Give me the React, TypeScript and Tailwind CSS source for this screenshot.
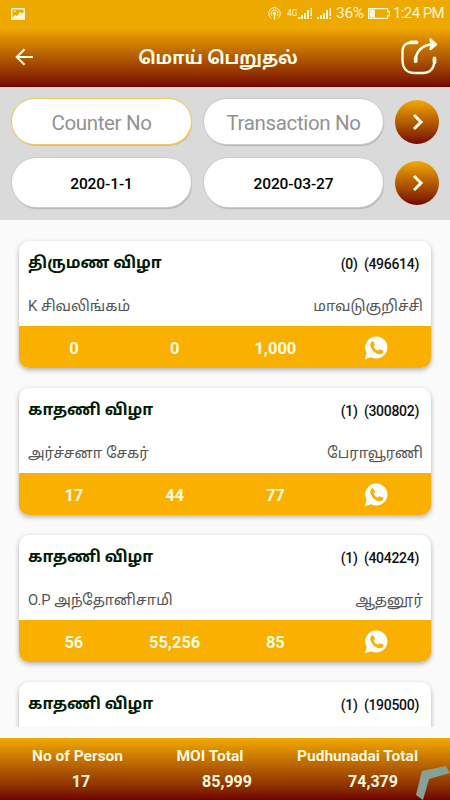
import { ReactNode } from 'react'

type Entry = {
	title: string
	count: number
	code: string
	name: string
	place: string
	values: string[]
}

const ENTRIES: Entry[] = [
	{ title: 'திருமண விழா', count: 0, code: '496614', name: 'K சிவலிங்கம்', place: 'மாவடுகுறிச்சி', values: ['0', '0', '1,000'] },
	{ title: 'காதணி விழா', count: 1, code: '300802', name: 'அர்ச்சனா சேகர்', place: 'பேராவூரணி', values: ['17', '44', '77'] },
	{ title: 'காதணி விழா', count: 1, code: '404224', name: 'O.P அந்தோனிசாமி', place: 'ஆதனூர்', values: ['56', '55,256', '85'] },
	{ title: 'காதணி விழா', count: 1, code: '190500', name: '', place: '', values: ['', '', ''] },
]

const TOTALS = [
	{ label: 'No of Person', value: '17' },
	{ label: 'MOI Total', value: '85,999' },
	{ label: 'Pudhunadai Total', value: '74,379' },
]

const Signal = () => (
	<svg width="15" height="12" viewBox="0 0 15 12" fill="currentColor">
		<path d="M0 9h2v2H0zM3 7h2v4H3zM6 5h2v6H6zM9 2h2v9H9zM12.500 0h1.500v8h-1.500zM12.500 9.500h1.500V11h-1.500z" />
	</svg>
)

const StatusBar = () => (
	<div className="flex h-[27px] shrink-0 items-center bg-[#eda900] pl-[11px] pr-[7px] text-[#fff6d8]">
		<svg width="14" height="12" viewBox="0 0 14 12">
			<path fill="currentColor" fillRule="evenodd" d="M1 0h12a1 1 0 0 1 1 1v10a1 1 0 0 1-1 1H1a1 1 0 0 1-1-1V1a1 1 0 0 1 1-1zm.5 1.500v8L4 7l2 1 3-4 1.500 1.500 2-1v-3zM3 2.500h1.500V4H3z" />
		</svg>
		<svg className="ml-auto" width="13" height="13" viewBox="0 0 13 13" fill="none" stroke="currentColor" strokeWidth="1">
			<path d="M3.200 11.300a5.800 5.800 0 1 1 6.600 0M4 8.900a3.500 3.500 0 1 1 5 0" />
			<circle cx="6.500" cy="6.300" r="1.200" fill="currentColor" />
			<path d="M6.500 7v5.500" strokeWidth="1.500" />
		</svg>
		<span className="ml-[6px] w-[11px] text-[8.500px] leading-none tracking-tight">4G</span>
		<Signal />
		<span className="ml-[4px] flex"><Signal /></span>
		<span className="ml-[4px] w-[30px] whitespace-nowrap text-[15.500px] leading-none tracking-[-0.300px]">36%</span>
		<svg className="ml-[2px]" width="22" height="11" viewBox="0 0 22 11">
			<path fill="none" stroke="currentColor" strokeWidth="1.200" d="M.6.600h19v3h1.800v4h-1.800v2.800H.6z" />
			<path fill="currentColor" d="M1.500 1.500H7v8H1.500z" />
		</svg>
		<span className="ml-[3px] w-[50px] whitespace-nowrap text-[15px] leading-none tracking-[-0.600px]">1:24 PM</span>
	</div>
)

const Header = () => (
	<header className="flex h-[60px] shrink-0 items-center justify-between bg-linear-to-b from-[#f2aa00] to-[#740000] pl-[15px] pr-[12px] text-[#fffbe9]">
		<svg width="19" height="18" viewBox="0 0 19 18" fill="none" stroke="currentColor" strokeWidth="2">
			<path d="M18 9H2M9.500 1.200 1.700 9l7.800 7.800" />
		</svg>
		<h1 className="ml-[2px] whitespace-nowrap pt-[2px] text-[17.700px] font-bold">மொய் பெறுதல்</h1>
		<svg width="38" height="38" viewBox="0 0 38 38" fill="none" stroke="currentColor" strokeWidth="2.400" strokeLinecap="round" strokeLinejoin="round">
			<path d="M17 4.300C7 4 2.500 6 2.500 14v8c0 8.500 4.500 13 12 13h8c7.500 0 12-4.500 12-14" />
			<path d="M11 4.300h5.500M34.500 20.500V24" strokeWidth="3.800" />
			<path d="M15.500 23.500C15.500 13 23 6.500 33 6.300" strokeWidth="2.600" />
			<path d="M15.700 23v-3" strokeWidth="3.800" />
			<path d="m30.500 1.500 5.500 4.800-5.500 4.700 1.200-4.700z" fill="currentColor" />
		</svg>
	</header>
)

const Pill = ({ className = '', children }: { className?: string; children: ReactNode }) => (
	<div className={`flex w-[179px] items-center justify-center rounded-full bg-white ${className}`}>{children}</div>
)

const GoButton = () => (
	<button
		aria-label="Go"
		className="ml-[-1px] flex size-[44px] items-center justify-center rounded-full bg-linear-to-b from-[#f2aa00] to-[#740000]"
	>
		<svg className="ml-px" width="12" height="18" viewBox="0 0 12 18" fill="none" stroke="#fffbe9" strokeWidth="3">
			<path d="m2 2 7 7-7 7" />
		</svg>
	</button>
)

const Filters = () => (
	<section className="flex h-[133px] shrink-0 flex-col border-t border-[#eadede] bg-[#dadada] pl-[12px] pt-[11px]">
		<div className="flex items-center gap-[13px]">
			<Pill className="h-[45px] pt-[4px] text-[20.500px] tracking-[-0.350px] text-[#929292] shadow-[0_0_0_1px_#efc968,1px_2px_0_0_#dfc06c]">Counter No</Pill>
			<Pill className="h-[45px] pt-[4px] text-[20.500px] tracking-[-0.350px] text-[#929292] shadow-[0_0_0_1px_#cbcbcb,1px_2px_1px_0_#b5b5b5]">Transaction No</Pill>
			<GoButton />
		</div>
		<div className="mt-[14px] flex items-center gap-[13px]">
			<Pill className="h-[49px] pt-[4px] text-[15.500px] font-medium tracking-[-0.100px] text-black shadow-[0_0_0_1px_#cbcbcb,1px_2px_1px_0_#b5b5b5]">2020-1-1</Pill>
			<Pill className="h-[49px] pt-[4px] text-[15.500px] font-medium tracking-[-0.100px] text-black shadow-[0_0_0_1px_#cbcbcb,1px_2px_1px_0_#b5b5b5]">2020-03-27</Pill>
			<GoButton />
		</div>
	</section>
)

const WhatsappIcon = () => (
	<svg className="mx-auto -mt-[3px]" width="24" height="24" viewBox="0 0 24 24">
		<path fill="#fff" d="M12.500.5a11 11 0 1 1-5.300 20.700L.7 23.300l2-6.400A11 11 0 0 1 12.500.5z" />
		<path
			fill="#f9b000"
			d="M8.200 5.200c.5-.2 1-.1 1.300.5l1.300 2.700c.2.500.1.900-.2 1.200l-.9 1.200c.8 1.800 2.300 3.200 4.200 4l1.200-1.200c.3-.3.700-.4 1.200-.2l2.600 1.200c.5.300.6.600.4 1.200-.4 1.700-2 2.700-3.700 2.500-4.700-.7-8.500-4.600-9.300-8.800-.3-1.900.5-3.700 1.900-4.300z"
		/>
	</svg>
)

const EntryCard = ({ title, count, code, name, place, values }: Entry) => (
	<article className="h-[127px] shrink-0 overflow-hidden rounded-[10px] bg-white shadow-[0_2px_5px_rgba(0,0,0,0.3)]">
		<div className="flex h-[46px] items-center justify-between pl-[9px] pr-[12px]">
			<h2 className="whitespace-nowrap pb-[2px] text-[15.750px] font-bold text-[#001a06]">{title}</h2>
			<span className="whitespace-pre text-[14px] font-medium tracking-[-0.300px] text-[#111]">{`(${count})  (${code})`}</span>
		</div>
		<div className="flex h-[39px] items-center justify-between pl-[9px] pr-[8px] pb-px text-[14.800px] text-[#555]">
			<span className="whitespace-nowrap">{name}</span>
			<span className="whitespace-nowrap">{place}</span>
		</div>
		<div className="grid h-[42px] grid-cols-4 items-center bg-[#f9b000] px-[4.500px] pt-[4px] text-center text-[16.500px] font-bold text-[#fffbe0]">
			{values.map((v, i) => (
				<span key={i}>{v}</span>
			))}
			<WhatsappIcon />
		</div>
	</article>
)

const Totals = () => (
	<footer className="relative h-[62px] shrink-0 overflow-hidden bg-linear-to-b from-[#f2aa00] to-[#700000] pt-[8px] text-center font-bold text-[#fff8df]">
		<div className="flex justify-between pl-[32px] pr-[32px] text-[15.500px] leading-[20px]">
			{TOTALS.map(({ label }) => (
				<span key={label}>{label}</span>
			))}
		</div>
		<div className="mt-[6px] grid grid-cols-3 pl-[8px] pr-[4px] text-[16px] leading-[20px]">
			{TOTALS.map(({ label, value }) => (
				<span key={label}>{value}</span>
			))}
		</div>
		{/* corner of the assistive overlay */}
		<svg className="absolute bottom-0 right-0" width="36" height="36" viewBox="0 0 36 36" fill="#86a298">
			<path d="m8 7 24-5 4 7-21 6-6 21-7-5z" />
		</svg>
	</footer>
)

const App = () => (
	<div className="flex h-[800px] w-[450px] flex-col overflow-hidden bg-[#fafafa] font-[Roboto,'Noto_Sans_Tamil','Noto_Sans',sans-serif]">
		<StatusBar />
		<Header />
		<Filters />
		<main className="flex h-[507px] shrink-0 flex-col gap-[20px] overflow-hidden px-[19px] pt-[21px]">
			{ENTRIES.map((entry) => (
				<EntryCard key={entry.code} {...entry} />
			))}
		</main>
		<div className="h-[11px] shrink-0" />
		<Totals />
	</div>
)

export default App
